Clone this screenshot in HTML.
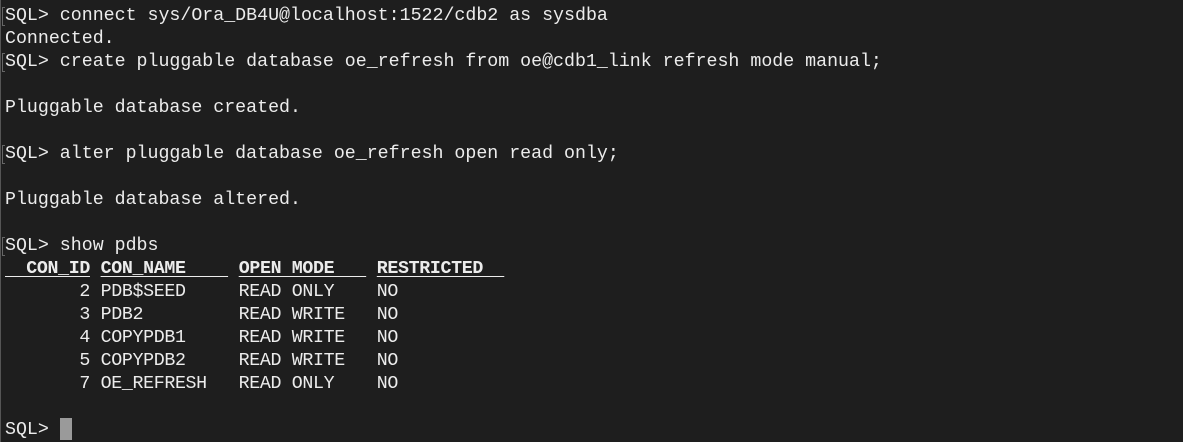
<!DOCTYPE html>
<html><head><style>
html,body{margin:0;padding:0;background:#1e1e1e;width:1183px;height:442px;overflow:hidden}
body{position:relative}
.edge{position:absolute;left:0;top:0;width:1px;height:442px;background:#555}
pre{margin:0;position:absolute;left:5px;top:5px;font-family:"Liberation Mono",monospace;font-size:18.28px;line-height:23px;color:#ececec;white-space:pre}
.t{letter-spacing:-0.34px}
b{font-weight:bold;text-decoration:underline;text-decoration-thickness:1px;text-underline-offset:3px;text-decoration-skip-ink:none}
.br{position:absolute;left:2px;width:3px;height:19px;border:1px solid #666;border-right:none;box-sizing:border-box}
.cur{position:absolute;left:60px;top:418px;width:12px;height:22px;background:#9a9a9a}
</style></head><body>
<div class="edge"></div>
<div class="br" style="top:7px"></div>
<div class="br" style="top:53px"></div>
<div class="br" style="top:145px"></div>
<div class="br" style="top:237px"></div>
<pre>SQL&gt; connect sys/Ora_DB4U@localhost:1522/cdb2 as sysdba
Connected.
SQL&gt; create pluggable database oe_refresh from oe@cdb1_link refresh mode manual;

Pluggable database created.

SQL&gt; alter pluggable database oe_refresh open read only;

Pluggable database altered.

SQL&gt; show pdbs
<span class="t"><b>  CON_ID</b> <b>CON_NAME    </b> <b>OPEN MODE   </b> <b>RESTRICTED  </b>
       2 PDB$SEED     READ ONLY    NO
       3 PDB2         READ WRITE   NO
       4 COPYPDB1     READ WRITE   NO
       5 COPYPDB2     READ WRITE   NO
       7 OE_REFRESH   READ ONLY    NO</span>

SQL&gt; </pre>
<div class="cur"></div>
</body></html>
